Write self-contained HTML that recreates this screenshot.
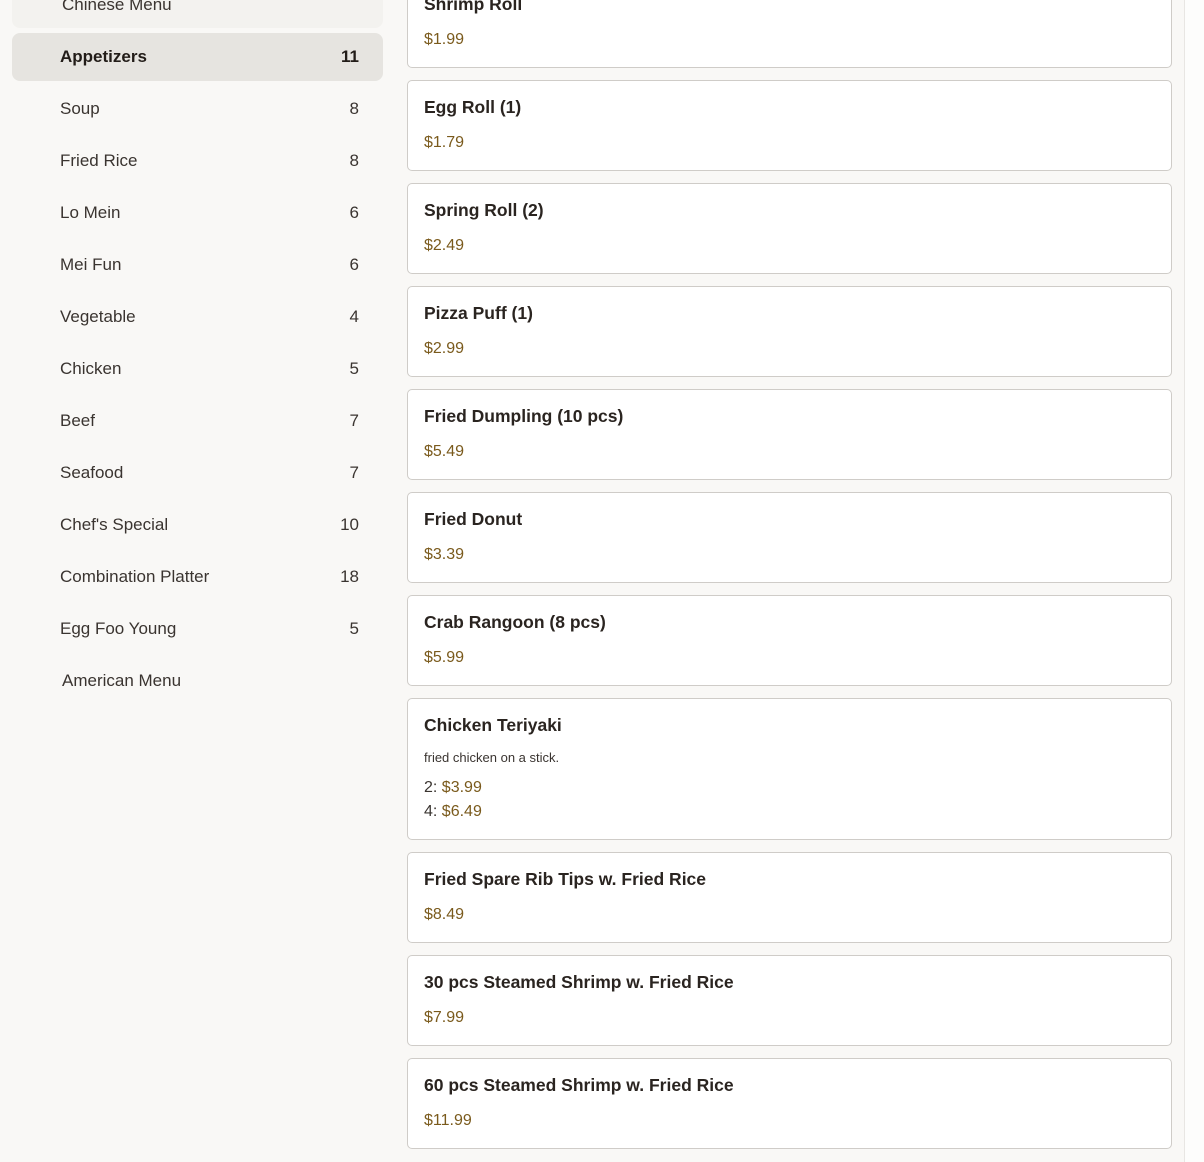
<!DOCTYPE html>
<html><head><style>
body{margin:0;width:1204px;height:1162px;overflow:hidden;background:#f9f8f6;font-family:"Liberation Sans",sans-serif;color:#2a2420;position:relative}
.top{position:absolute;left:12px;top:-20px;width:371px;height:48px;background:#f3f2ef;border-radius:8px}
.top span{position:absolute;left:50px;top:15px;font-size:17px;color:#3a3430}
.cat{position:absolute;left:12px;width:371px;height:48px;border-radius:8px;font-size:17px;color:#3a3430}
.cat .n{position:absolute;left:48px;top:14px}
.cat .c{position:absolute;right:24px;top:14px}
.cat.a{background:#e6e4e0;font-weight:bold;color:#221c18}
.am{position:absolute;left:62px;top:671px;font-size:17px;color:#3a3430}
.card{position:absolute;left:407px;width:763px;height:89px;background:#fff;border:1px solid #cfccc8;border-radius:5px}
.card .t{position:absolute;left:16px;top:16px;font-size:17.5px;font-weight:bold;color:#2a2420}
.card .p{position:absolute;left:16px;top:53px;font-size:16px;color:#7a5a1c}
.card .d{position:absolute;left:16px;top:51px;font-size:13px;color:#3a3430}
.pl{position:absolute;left:16px;font-size:16px;color:#3a3430}
.pl b{font-weight:normal;color:#7a5a1c}
.sb{position:absolute;left:1184px;top:0;width:20px;height:1162px;background:#fdfdfc;border-left:1px solid #e8e6e3}
</style></head><body>
<div class="top"><span>Chinese Menu</span></div>
<div class="cat a" style="top:33px"><span class="n">Appetizers</span><span class="c">11</span></div>
<div class="cat" style="top:85px"><span class="n">Soup</span><span class="c">8</span></div>
<div class="cat" style="top:137px"><span class="n">Fried Rice</span><span class="c">8</span></div>
<div class="cat" style="top:189px"><span class="n">Lo Mein</span><span class="c">6</span></div>
<div class="cat" style="top:241px"><span class="n">Mei Fun</span><span class="c">6</span></div>
<div class="cat" style="top:293px"><span class="n">Vegetable</span><span class="c">4</span></div>
<div class="cat" style="top:345px"><span class="n">Chicken</span><span class="c">5</span></div>
<div class="cat" style="top:397px"><span class="n">Beef</span><span class="c">7</span></div>
<div class="cat" style="top:449px"><span class="n">Seafood</span><span class="c">7</span></div>
<div class="cat" style="top:501px"><span class="n">Chef's Special</span><span class="c">10</span></div>
<div class="cat" style="top:553px"><span class="n">Combination Platter</span><span class="c">18</span></div>
<div class="cat" style="top:605px"><span class="n">Egg Foo Young</span><span class="c">5</span></div>
<div class="am">American Menu</div>

<div class="card" style="top:-23px"><span class="t">Shrimp Roll</span><span class="p">$1.99</span></div>
<div class="card" style="top:80px"><span class="t">Egg Roll (1)</span><span class="p">$1.79</span></div>
<div class="card" style="top:183px"><span class="t">Spring Roll (2)</span><span class="p">$2.49</span></div>
<div class="card" style="top:286px"><span class="t">Pizza Puff (1)</span><span class="p">$2.99</span></div>
<div class="card" style="top:389px"><span class="t">Fried Dumpling (10 pcs)</span><span class="p">$5.49</span></div>
<div class="card" style="top:492px"><span class="t">Fried Donut</span><span class="p">$3.39</span></div>
<div class="card" style="top:595px"><span class="t">Crab Rangoon (8 pcs)</span><span class="p">$5.99</span></div>
<div class="card" style="top:698px;height:140px"><span class="t">Chicken Teriyaki</span><span class="d">fried chicken on a stick.</span>
<span class="pl" style="top:80px">2: <b>$3.99</b></span><span class="pl" style="top:104px">4: <b>$6.49</b></span></div>
<div class="card" style="top:852px"><span class="t">Fried Spare Rib Tips w. Fried Rice</span><span class="p">$8.49</span></div>
<div class="card" style="top:955px"><span class="t">30 pcs Steamed Shrimp w. Fried Rice</span><span class="p">$7.99</span></div>
<div class="card" style="top:1058px"><span class="t">60 pcs Steamed Shrimp w. Fried Rice</span><span class="p">$11.99</span></div>
<div class="sb"></div>
</body></html>
